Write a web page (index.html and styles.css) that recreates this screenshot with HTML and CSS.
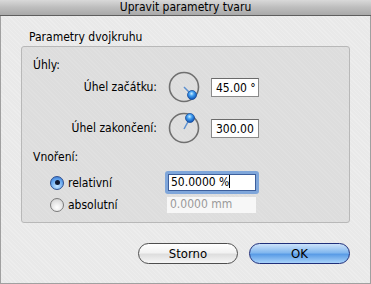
FILE: index.html
```html
<!DOCTYPE html>
<html lang="cs">
<head>
  <meta charset="UTF-8">
  <title>Upravit parametry tvaru</title>
  <link rel="stylesheet" href="styles.css">
</head>
<body>
  <div class="window">
    <div class="titlebar">Upravit parametry tvaru</div>

    <div class="group-label">Parametry dvojkruhu</div>
    <div class="group">
      <div class="section-label">Úhly:</div>

      <div class="angles">
        <label class="angle-label">Úhel začátku:</label>
        <svg class="dial" width="32" height="32" viewBox="0 0 32 32">
          <defs>
            <radialGradient id="knob" cx="0.45" cy="0.35" r="0.6">
              <stop offset="0" stop-color="#c9ecff"/>
              <stop offset="0.45" stop-color="#3f9df0"/>
              <stop offset="1" stop-color="#1358b8"/>
            </radialGradient>
          </defs>
          <circle cx="16" cy="16" r="14.5" fill="none" stroke="#707070" stroke-width="1.6"/>
          <line x1="16" y1="16" x2="23.5" y2="23.5" stroke="#5d90cf" stroke-width="1.5"/>
          <circle cx="24" cy="24" r="4.5" fill="url(#knob)" stroke="#1c4f9a" stroke-width="0.8"/>
        </svg>
        <div class="field">45.00 °</div>

        <label class="angle-label">Úhel zakončení:</label>
        <svg class="dial" width="32" height="32" viewBox="0 0 32 32">
          <circle cx="16" cy="16" r="14.5" fill="none" stroke="#707070" stroke-width="1.6"/>
          <line x1="16" y1="17" x2="21.5" y2="7" stroke="#5d90cf" stroke-width="1.5"/>
          <circle cx="22" cy="6" r="4.5" fill="url(#knob)" stroke="#1c4f9a" stroke-width="0.8"/>
        </svg>
        <div class="field">300.00</div>
      </div>

      <div class="section-label nesting">Vnoření:</div>

      <div class="options">
        <div class="radio checked"><span class="dot"></span>relativní</div>
        <div class="focus-ring"><div class="field wide">50.0000 %<span class="caret"></span></div></div>

        <div class="radio"><span class="dot"></span>absolutní</div>
        <div class="field wide disabled">0.0000 mm</div>
      </div>
    </div>

    <div class="buttons">
      <button class="btn">Storno</button>
      <button class="btn default">OK</button>
    </div>
  </div>
</body>
</html>
```

FILE: styles.css
```css
body {
  margin: 0;
  font-family: "DejaVu Sans Condensed", "DejaVu Sans", sans-serif;
  font-size: 12px;
  color: #000;
}

.window {
  width: 371px;
  height: 284px;
  box-sizing: border-box;
  background-color: #e9e9e9;
  background-image: repeating-linear-gradient(45deg, rgba(255, 255, 255, 0.18) 0 1px, rgba(0, 0, 0, 0) 1px 3px);
  box-shadow: inset 1px 0 0 #a0a0a0, inset -1px 0 0 #a0a0a0, inset 0 -1px 0 #a0a0a0;
  overflow: hidden;
}

.titlebar {
  height: 15px;
  line-height: 15px;
  text-align: center;
  font-size: 12px;
  background: linear-gradient(#d9d9d9, #bdbdbd 50%, #a9a9a9);
  border-bottom: 1px solid #5e5e5e;
}

.group-label {
  margin: 14px 0 0 29px;
  line-height: 14px;
  height: 14px;
}

.group {
  margin: 2px 0 0 21px;
  width: 329px;
  height: 177px;
  box-sizing: border-box;
  border: 1px solid #b8b8b8;
  border-radius: 3px;
  background: rgba(200, 200, 200, 0.35);
  padding: 11px 0 0 11px;
}

.section-label {
  line-height: 14px;
  height: 14px;
}

.angles {
  display: grid;
  grid-template-columns: 124px 32px 48px;
  column-gap: 11px;
  row-gap: 9px;
  align-items: center;
  margin-top: -1px;
}

.angle-label {
  text-align: right;
}

.field {
  height: 19px;
  line-height: 19px;
  box-sizing: border-box;
  background: #fff;
  border: 1px solid #8a8a8a;
  border-top-color: #6a6a6a;
  padding-left: 4px;
  white-space: nowrap;
}

.nesting {
  margin-top: 6px;
}

.options {
  display: grid;
  grid-template-columns: 115px 94px;
  grid-template-rows: 23px 20px;
  row-gap: 1px;
  align-items: center;
  margin: 7px 0 0 17px;
}

.radio {
  display: flex;
  align-items: center;
  gap: 4px;
}

.dot {
  width: 14px;
  height: 14px;
  box-sizing: border-box;
  border-radius: 50%;
  border: 1px solid #7a7a7a;
  background: radial-gradient(circle at 50% 70%, #ffffff, #dcdcdc 70%, #bdbdbd);
  display: flex;
  align-items: center;
  justify-content: center;
}

.radio.checked .dot {
  border-color: #2d4f91;
  background: radial-gradient(circle at 50% 75%, #c8e6ff, #6aaaf0 55%, #2f6ec9);
}

.radio.checked .dot::after {
  content: "";
  width: 5px;
  height: 5px;
  border-radius: 50%;
  background: #101830;
}

.focus-ring {
  width: 94px;
  height: 23px;
  box-sizing: border-box;
  padding: 3px;
  border-radius: 3px;
  background: #7fa6da;
}

.field.wide {
  width: 88px;
  height: 17px;
  line-height: 15px;
  padding-left: 2px;
  border-color: #3d5f9c;
}

.caret {
  display: inline-block;
  width: 1px;
  height: 13px;
  background: #000;
  vertical-align: -2px;
}

.field.disabled {
  margin-left: 2px;
  width: 89px;
  height: 16px;
  border: none;
  background: #f7f7f7;
  color: #9a9a9a;
  padding-left: 3px;
}

.buttons {
  display: flex;
  justify-content: flex-end;
  gap: 11px;
  margin: 20px 21px 0 0;
}

.btn {
  font-family: "DejaVu Sans Condensed", "DejaVu Sans", sans-serif;
  font-size: 13px;
  width: 100px;
  height: 21px;
  border-radius: 11px;
  border: 1px solid #4e4e4e;
  background: linear-gradient(#ffffff, #f2f2f2 45%, #dedede 55%, #f6f6f6);
  padding: 0;
  color: #000;
}

.btn.default {
  width: 101px;
  border-color: #1f2f7a;
  background: linear-gradient(#cde3fa, #83b8ef 45%, #5a9ce6 55%, #a9d3fa);
}
```
